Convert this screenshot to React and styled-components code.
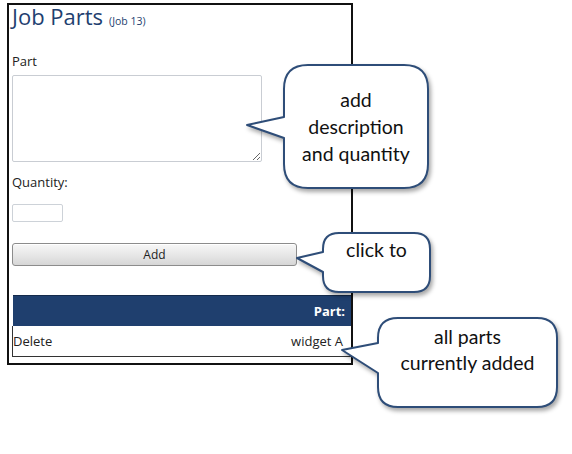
import React from "react";
import styled, { createGlobalStyle } from "styled-components";

const Global = createGlobalStyle`
  html, body { margin: 0; padding: 0; background: #fff; }
  body { width: 572px; height: 454px; overflow: hidden; position: relative; font-family: "Open Sans", "Noto Sans", sans-serif; }
`;

const Page = styled.div`
  position: relative;
  width: 572px;
  height: 454px;
  padding: 3px 0 0 7px;
  box-sizing: border-box;
`;

const Frame = styled.div`
  width: 346px;
  height: 362px;
  box-sizing: border-box;
  border: 2px solid #111;
  padding: 0 0 0 3px;
  display: flex;
  flex-direction: column;
  align-items: flex-start;
  color: #222;
`;

const Title = styled.h1`
  margin: 0;
  font-family: "Open Sans", sans-serif;
  font-weight: 400;
  font-size: 22px;
  line-height: 22px;
  height: 22px;
  color: #1f3f70;
  display: flex;
  align-items: baseline;
  gap: 6px;
`;

const SubTitle = styled.span`
  font-size: 10.5px;
  line-height: 1;
  color: #1f3f70;
`;

const Label = styled.label`
  font-size: 13px;
  line-height: 16px;
  margin-top: ${(p) => p.$top}px;
  color: #222;
`;

const TextArea = styled.textarea`
  margin-top: 6px;
  width: 250px;
  height: 87px;
  box-sizing: border-box;
  border: 1px solid #c9cdd3;
  border-radius: 2px;
  background: #fff;
  resize: both;
  padding: 2px;
`;

const QtyInput = styled.input`
  margin-top: 14px;
  width: 51px;
  height: 18px;
  box-sizing: border-box;
  border: 1px solid #cdd2d8;
  border-radius: 2px;
  background: #fff;
`;

const AddButton = styled.button`
  margin-top: 21px;
  width: 285px;
  height: 23px;
  box-sizing: border-box;
  border: 1px solid #8c8c8c;
  border-radius: 3px;
  background: linear-gradient(#f7f7f7, #e6e6e6 55%, #d6d6d6);
  box-shadow: inset 0 1px 0 #fff;
  font-family: "Open Sans", sans-serif;
  font-size: 12px;
  color: #222;
  padding: 0;
`;

const Table = styled.table`
  margin-top: 29px;
  width: 339px;
  border-collapse: collapse;
  font-size: 13px;
`;

const HeadCell = styled.th`
  background: #1f3f6e;
  color: #fff;
  font-weight: 700;
  height: 30px;
  padding: 0 6px 0 0;
  text-align: ${(p) => p.$align || "left"};
  border-top: 1px solid #142a4b;
`;

const Cell = styled.td`
  height: 30px;
  padding: 0 8px 0 0;
  text-align: ${(p) => p.$align || "left"};
  color: #222;
  border-bottom: 1px solid #333;
  &:first-child { border-left: 1px solid #333; padding-left: 0; }
`;

const CalloutBox = styled.div`
  position: absolute;
  left: ${(p) => p.$x}px;
  top: ${(p) => p.$y}px;
  width: ${(p) => p.$w}px;
  height: ${(p) => p.$h}px;
  display: flex;
  flex-direction: column;
  align-items: center;
  justify-content: ${(p) => p.$justify || "center"};
  padding-top: ${(p) => p.$pt || 0}px;
  box-sizing: border-box;
  font-family: "Lato", "Open Sans", sans-serif;
  font-size: 19.5px;
  line-height: ${(p) => p.$lh || 27}px;
  color: #111;
  text-align: center;
`;

const Shape = styled.svg`
  position: absolute;
  left: 0;
  top: 0;
  overflow: visible;
  filter: drop-shadow(2px 3px 2px rgba(0, 0, 0, 0.35));
`;

const CalloutText = styled.span`
  position: relative;
  white-space: nowrap;
`;

function calloutPath(w, h, r, tx, ty, b1, b2) {
  return [
    `M ${r} 0`,
    `L ${w - r} 0`,
    `Q ${w} 0 ${w} ${r}`,
    `L ${w} ${h - r}`,
    `Q ${w} ${h} ${w - r} ${h}`,
    `L ${r} ${h}`,
    `Q 0 ${h} 0 ${h - r}`,
    `L 0 ${b2}`,
    `L ${tx} ${ty}`,
    `L 0 ${b1}`,
    `L 0 ${r}`,
    `Q 0 0 ${r} 0 Z`,
  ].join(" ");
}

function Callout({ x, y, w, h, r, tip, base, lines, justify, pt, lh }) {
  return (
    <CalloutBox $x={x} $y={y} $w={w} $h={h} $justify={justify} $pt={pt} $lh={lh}>
      <Shape width={w} height={h}>
        <path
          d={calloutPath(w, h, r, tip[0], tip[1], base[0], base[1])}
          fill="#fff"
          stroke="#2e4d78"
          strokeWidth="2"
          strokeLinejoin="round"
        />
      </Shape>
      {lines.map((l) => (
        <CalloutText key={l}>{l}</CalloutText>
      ))}
    </CalloutBox>
  );
}

export default function App() {
  return (
    <>
      <Global />
      <Page>
        <Frame>
          <Title>
            Job Parts <SubTitle>(Job 13)</SubTitle>
          </Title>
          <Label $top={26}>Part</Label>
          <TextArea />
          <Label $top={12}>Quantity:</Label>
          <QtyInput />
          <AddButton>Add</AddButton>
          <Table>
            <thead>
              <tr>
                <HeadCell />
                <HeadCell $align="right">Part:</HeadCell>
              </tr>
            </thead>
            <tbody>
              <tr>
                <Cell>Delete</Cell>
                <Cell $align="right">widget A</Cell>
              </tr>
            </tbody>
          </Table>
        </Frame>
        <Callout
          x={284}
          y={65}
          w={144}
          h={123}
          r={24}
          tip={[-37, 60]}
          base={[52, 73]}
          lines={["add", "description", "and quantity"]}
        />
        <Callout
          x={323}
          y={233}
          w={107}
          h={59}
          r={16}
          tip={[-26, 25]}
          base={[19, 39]}
          lines={["click to"]}
          justify="flex-start"
          pt={3}
        />
        <Callout
          x={378}
          y={318}
          w={179}
          h={89}
          r={20}
          tip={[-36, 32]}
          base={[25, 55]}
          lines={["all parts", "currently added"]}
          justify="flex-start"
          pt={6}
          lh={26}
        />
      </Page>
    </>
  );
}
